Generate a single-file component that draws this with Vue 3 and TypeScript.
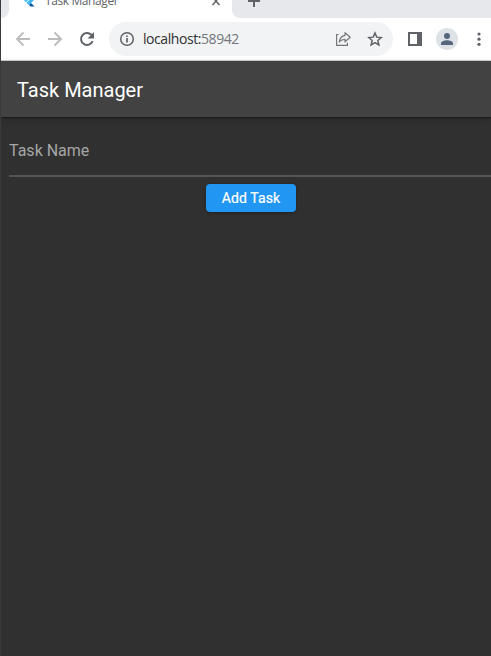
<script setup lang="ts">
import { ref } from 'vue'

const title = 'Task Manager'
const host = 'localhost:'
const port = '58942'
const taskName = ref('')
const tasks = ref<string[]>([])

function addTask(): void {
  const name = taskName.value.trim()
  if (!name) return
  tasks.value.push(name)
  taskName.value = ''
}
</script>

<template>
  <div class="window">
    <header class="browser">
      <div class="tabs">
        <div class="tab-before"></div>
        <div class="tab">
          <svg class="favicon" width="12" height="16" viewBox="0 0 12 16">
            <path d="M1 9.500 8.500 2h4L3 11.500z" fill="#54c5f8" />
            <path d="M3.500 12 7 8.500h4.500L8 12l-2 2z" fill="#38b6f6" />
            <path d="M6 14 8 12l3.500 3.500H7.500z" fill="#01579b" />
          </svg>
          <span class="tab-title">{{ title }}</span>
          <svg class="close" width="10" height="10" viewBox="0 0 10 10">
            <path d="m1.500 1 7 8M8.500 1l-7 8" stroke="#5f6368" stroke-width="1.500" />
          </svg>
        </div>
        <div class="tab-after">
          <svg width="12" height="12" viewBox="0 0 12 12">
            <path d="M6 0v12M0 6h12" stroke="#5f6368" stroke-width="2" />
          </svg>
        </div>
      </div>
      <div class="toolbar">
        <svg class="nav" width="16" height="16" viewBox="0 0 16 16">
          <path d="M15 8H2M8.500 1.500 2 8l6.500 6.500" fill="none" stroke="#babcbe" stroke-width="1.900" />
        </svg>
        <svg class="nav" width="16" height="16" viewBox="0 0 16 16">
          <path d="M1 8h13M7.500 1.500 14 8l-6.500 6.500" fill="none" stroke="#babcbe" stroke-width="1.900" />
        </svg>
        <svg class="nav reload" width="16" height="16" viewBox="0 0 16 16">
          <path d="M13.600 10.200A6 6 0 1 1 12.300 3.800L14 5.500" fill="none" stroke="#5f6368" stroke-width="2" />
          <path d="M15 1v6.500H8.500z" fill="#5f6368" />
        </svg>
        <div class="address">
          <svg width="16" height="16" viewBox="0 0 16 16">
            <circle cx="8" cy="8" r="6.300" fill="none" stroke="#5f6368" stroke-width="1.500" />
            <path d="M8 7v4.600M8 4.400v1.700" stroke="#5f6368" stroke-width="1.700" />
          </svg>
          <span class="url">{{ host }}<span class="port">{{ port }}</span></span>
          <svg class="share" width="16" height="16" viewBox="0 0 16 16">
            <path d="M3.500 3.500H1.600v10.900h10.800v-2.600" fill="none" stroke="#74777b" stroke-width="1.200" />
            <path d="M10 1.700 15.200 6.200 10 10.800V8.400C7.500 8.400 5.900 9 4.300 11c.4-3.700 2.400-6.100 5.700-6.700z" fill="none" stroke="#74777b" stroke-width="1.200" stroke-linejoin="round" />
          </svg>
          <svg class="star" width="16" height="16" viewBox="0 0 16 16">
            <path d="m8 2 1.750 4.150 4.500.4-3.400 2.950 1 4.400L8 11.550 4.150 13.900l1-4.400-3.400-2.950 4.500-.4z" fill="none" stroke="#5f6368" stroke-width="1.500" />
          </svg>
        </div>
        <svg class="panel" width="14" height="14" viewBox="0 0 14 14">
          <path d="M0 0h14v14H0zM2 2v10h7V2z" fill="#5f6368" fill-rule="evenodd" />
        </svg>
        <div class="avatar">
          <svg width="12" height="12" viewBox="0 0 12 12">
            <circle cx="6" cy="3" r="3" fill="#56657c" />
            <path d="M0 12v-1.800C0 8.300 3.500 7.300 6 7.300s6 1 6 2.900V12z" fill="#56657c" />
          </svg>
        </div>
        <svg class="more" width="4" height="14" viewBox="0 0 4 14">
          <circle cx="2" cy="2" r="1.600" fill="#5f6368" />
          <circle cx="2" cy="7.200" r="1.600" fill="#5f6368" />
          <circle cx="2" cy="12.300" r="1.600" fill="#5f6368" />
        </svg>
      </div>
    </header>
    <div class="app-bar"><h1>{{ title }}</h1></div>
    <main>
      <input v-model="taskName" type="text" placeholder="Task Name" @keyup.enter="addTask" />
      <button type="button" @click="addTask">Add Task</button>
      <p v-for="(task, i) in tasks" :key="i" class="task">{{ task }}</p>
    </main>
  </div>
</template>

<style>
body {
  background: #303030;
  overflow: hidden;
}
</style>

<style scoped>
.window {
  box-sizing: border-box;
  width: 491px;
  height: 656px;
  overflow: hidden;
  border-left: 1px solid #3a3a3a;
  background: #303030;
  font-family: Roboto, sans-serif;
}
.browser {
  box-sizing: border-box;
  height: 61px;
  background: #fff;
  border-bottom: 1px solid #d0d1d3;
  font-family: "Open Sans", "Noto Sans", sans-serif;
}
.tabs {
  display: flex;
  height: 18px;
  overflow: hidden;
}
.tab-before {
  width: 8px;
  background: #e7e8ec;
  border-bottom-right-radius: 8px;
}
.tab {
  display: flex;
  align-items: flex-start;
  width: 223px;
}
.favicon {
  margin: -9px 0 0 14px;
}
.tab-title {
  width: 166px;
  margin: -7px 0 0 10px;
  font-size: 12px;
  line-height: 16px;
  letter-spacing: -0.4px;
  color: #5f6368;
}
.close {
  margin-top: -4px;
}
.tab-after {
  flex: 1;
  background: #e7e8ec;
  border-bottom-left-radius: 8px;
}
.tab-after svg {
  display: block;
  margin: -5px 0 0 16px;
}
.toolbar {
  display: flex;
  align-items: center;
  height: 42px;
  padding-left: 14px;
}
.nav {
  margin-right: 16px;
}
.reload {
  margin-right: 14px;
}
.address {
  box-sizing: border-box;
  display: flex;
  align-items: center;
  width: 284px;
  height: 34px;
  padding-left: 10px;
  border-radius: 17px;
  background: #f1f3f4;
}
.url {
  width: 192px;
  margin-left: 8px;
  font-size: 14px;
  line-height: 20px;
  letter-spacing: -0.43px;
  color: #303134;
}
.port {
  color: #73767a;
}
.star {
  margin-left: 16px;
}
.panel {
  margin-left: 15px;
}
.avatar {
  display: flex;
  align-items: center;
  justify-content: center;
  width: 22px;
  height: 22px;
  margin-left: 14px;
  border-radius: 50%;
  background: #dee1e6;
}
.more {
  margin-left: 19px;
}
.app-bar {
  position: relative;
  display: flex;
  align-items: center;
  box-sizing: border-box;
  height: 56px;
  padding: 2px 0 0 16px;
  background: #424242;
  box-shadow: 0 1px 1px #1d1d1d, 0 2px 6px rgba(0, 0, 0, 0.22);
}
h1 {
  margin: 0;
  font-size: 20px;
  font-weight: 400;
  line-height: 24px;
  color: #fff;
}
main {
  display: flex;
  flex-direction: column;
  padding: 8px 0 0 8px;
}
input {
  box-sizing: border-box;
  width: 100%;
  height: 52px;
  padding: 0;
  border: 0;
  border-bottom: 2px solid #555;
  border-radius: 0;
  outline: 0;
  background: transparent;
  font: 400 16px/20px Roboto, sans-serif;
  color: #fff;
}
input::placeholder {
  color: #a6a6a6;
  opacity: 1;
}
button {
  width: 90px;
  height: 28px;
  margin: 7px 0 0 197px;
  padding: 0;
  border: 0;
  border-radius: 4px;
  background: #2196f3;
  box-shadow: 0 1px 3px rgba(0, 0, 0, 0.35);
  font: 400 14px/20px Roboto, sans-serif;
  letter-spacing: 0.1px;
  -webkit-text-stroke: 0.2px #fff;
  color: #fff;
}
.task {
  margin: 12px 0 0;
  color: #fff;
}
</style>
